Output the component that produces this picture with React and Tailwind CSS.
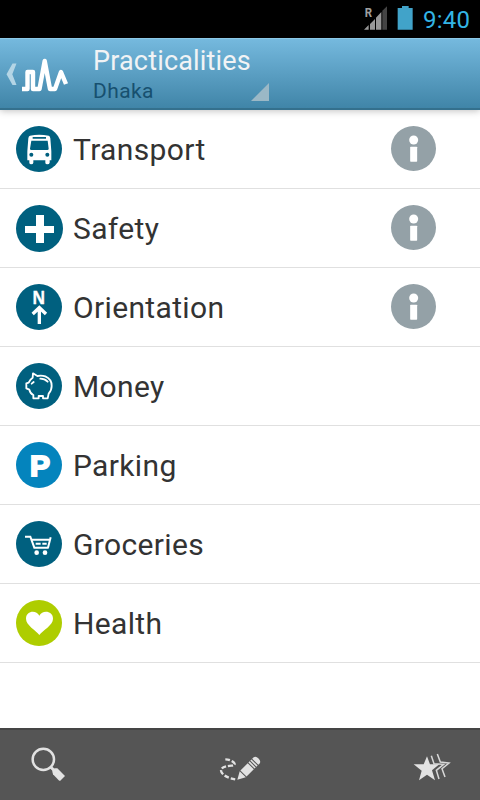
const BusIcon = () => (
  <svg viewBox="0 0 138 138" className="w-[46px] h-[46px]">
    <circle cx="69" cy="69" r="69" fill="#00607f" />
    <path
      fill="#fff"
      fillRule="evenodd"
      d="M42 29 Q69 24 98 29 Q102 30 103 37 L106 76 V103 H101 V110 Q100 115 94 115 Q88 115 88 110 V103 H52 V110 Q51 115 46 115 Q40 115 40 110 V103 H34 V76 L37 37 Q38 30 42 29 Z M50 33 V38 H90 V33 Z M46 44 L42 68 Q42 72 46 72 H94 Q98 72 98 68 L95 44 Z"
    />
    <circle cx="46" cy="86" r="6" fill="#00607f" />
    <circle cx="94" cy="86" r="6" fill="#00607f" />
  </svg>
)

const CrossIcon = () => (
  <svg viewBox="0 0 141 141" className="w-[47px] h-[47px]">
    <circle cx="70.5" cy="70.5" r="70.5" fill="#00607f" />
    <path fill="#fff" d="M60 30h24v33h30v21H84v30H60V84H27V63h33z" />
  </svg>
)

const NorthIcon = () => (
  <svg viewBox="0 0 138 138" className="w-[46px] h-[46px]">
    <circle cx="69" cy="69" r="69" fill="#00607f" />
    <text x="49" y="60" fill="#fff" stroke="#fff" strokeWidth="1" fontSize="55" fontWeight="700" textLength="39" lengthAdjust="spacingAndGlyphs" fontFamily="'Open Sans', sans-serif">N</text>
    <path d="M70 120V74M50 90l20-19 20 19" fill="none" stroke="#fff" strokeWidth="10" />
  </svg>
)

const PiggyIcon = () => (
  <svg viewBox="0 0 138 138" className="w-[46px] h-[46px]">
    <circle cx="69" cy="69" r="69" fill="#00607f" />
    <g fill="none" stroke="#fff" strokeWidth="5.5" strokeLinejoin="round" strokeLinecap="round">
      <path d="M51 31 L64 39 Q76 36 88 40 Q108 49 107 69 Q107 82 98 92 L95 106 H81 V99 H68 V106 H52 V96 Q43 92 40 80 L31 76 V61 L38 59 Q42 49 50 44 Z" />
      <path d="M73 47 Q86 47 95 56" />
      <path d="M47 62l6-5" />
    </g>
  </svg>
)

const ParkingIcon = () => (
  <svg viewBox="0 0 138 138" className="w-[46px] h-[46px]">
    <circle cx="69" cy="69" r="69" fill="#0484bd" />
    <text x="42" y="101" fill="#fff" stroke="#fff" strokeWidth="6" fontSize="89" fontWeight="700" textLength="60" lengthAdjust="spacingAndGlyphs" fontFamily="'Liberation Sans', sans-serif">P</text>
  </svg>
)

const CartIcon = () => (
  <svg viewBox="0 0 138 138" className="w-[46px] h-[46px]">
    <circle cx="69" cy="69" r="69" fill="#00607f" />
    <g fill="none" stroke="#fff" strokeWidth="6">
      <path d="M27 47H43L55 80H98" />
      <path d="M46 56H100M104 49L96 80" />
      <path d="M59 68H74M79 68H92" />
    </g>
    <circle cx="62" cy="95" r="7" fill="#fff" />
    <circle cx="87" cy="95" r="7" fill="#fff" />
  </svg>
)

const HeartIcon = () => (
  <svg viewBox="0 0 138 138" className="w-[46px] h-[46px]">
    <circle cx="69" cy="69" r="69" fill="#aecd00" />
    <path fill="#fff" d="M70 105C60 91 30 76 30 56C30 32 61 29 70 47C79 29 111 32 111 56C111 76 80 91 70 105Z" />
  </svg>
)

const InfoIcon = () => (
  <svg viewBox="0 0 135 135" className="w-[45px] h-[45px] -mt-px">
    <circle cx="67.5" cy="67.5" r="67.5" fill="#94a1a7" />
    <circle cx="68" cy="42" r="13.5" fill="#fff" />
    <rect x="57.5" y="62" width="21" height="45" rx="2" fill="#fff" />
  </svg>
)

const items = [
  { name: 'Transport', Icon: BusIcon, info: true },
  { name: 'Safety', Icon: CrossIcon, info: true },
  { name: 'Orientation', Icon: NorthIcon, info: true },
  { name: 'Money', Icon: PiggyIcon },
  { name: 'Parking', Icon: ParkingIcon },
  { name: 'Groceries', Icon: CartIcon },
  { name: 'Health', Icon: HeartIcon },
]

function StatusBar() {
  return (
    <div className="flex h-[38px] items-start justify-end bg-black">
      <svg viewBox="0 0 72 72" className="mt-[6px] w-6 h-6">
        <text x="2" y="33" fill="#a0a0a0" fontSize="37" fontWeight="700" textLength="22" lengthAdjust="spacingAndGlyphs" fontFamily="Roboto, sans-serif">R</text>
        <path fill="#444" d="M55 14L69 1V71H55Z" />
        <path fill="#989898" d="M0 71L14 57V71ZM18 54L33 39V71H18ZM36 35L52 18V71H36Z" />
      </svg>
      <svg viewBox="0 0 48 72" className="mt-[6px] ml-[9px] w-4 h-6">
        <path fill="#41a3c9" d="M15 0H35V6H47V71H2V6H15Z" />
      </svg>
      <span className="mt-[6px] ml-[10px] mr-[8px] w-[49px] whitespace-nowrap text-[24px] leading-[28px] tracking-[0.2px] text-[#33b5e5]">9:40</span>
    </div>
  )
}

function Header() {
  return (
    <header className="relative z-10 flex h-[72px] border-t border-b-2 border-t-[#8cc8e6] border-b-[#34708d] bg-linear-to-b from-[#75b9de] to-[#4085a8] shadow-[0_1px_7px_rgba(0,0,0,0.25)]">
      <svg viewBox="0 0 70 69" className="h-[69px] w-[70px] shrink-0">
        <path d="M12.5 24.5H16.5L12.3 35.2L16.5 46H12.5L6.5 35.2Z" fill="#b4d5e5" />
        <path d="M22 50H27.5V33H33V50H39.5L44.7 22L50 50H55L61 33L66 45" fill="none" stroke="#fff" strokeWidth="4.4" strokeLinejoin="round" />
      </svg>
      <div className="ml-[23px] flex flex-col">
        <h1 className="mt-[6px] text-[27px] leading-[32px] tracking-[0.17px] text-[#f1f3f5]">Practicalities</h1>
        <p className="mt-[1px] text-[21px] leading-[26px] tracking-[0.4px] text-[#17506f]">Dhaka</p>
      </div>
      <svg viewBox="0 0 18 18" className="mt-[44px] w-[18px] h-[18px]">
        <path d="M18 0V18H0Z" fill="#9bb8c6" />
      </svg>
    </header>
  )
}

function Row({ name, Icon, info }) {
  return (
    <li className="flex h-[79px] items-center border-b border-[#e0e0e0] pl-4 pr-[44px]">
      <div className="w-[57px] shrink-0"><Icon /></div>
      <span className="flex-1 pt-[2px] text-[30px] leading-9 tracking-[0.35px] text-[#333]">{name}</span>
      {info && <InfoIcon />}
    </li>
  )
}

function BottomBar() {
  return (
    <footer className="flex h-[72px] items-center justify-between border-t-2 border-[#454545] bg-[#555] px-[27px]">
      <svg viewBox="0 0 126 126" className="w-[42px] h-[42px]">
        <circle cx="49" cy="46" r="32" fill="none" stroke="#e2e2e2" strokeWidth="7.5" />
        <path d="M71 69L80 78" stroke="#e2e2e2" strokeWidth="9" />
        <path d="M76 83Q75 76 84 73L91 73L114 96L99 111L95 109L78 91Z" fill="#e2e2e2" />
      </svg>
      <svg viewBox="0 0 126 126" className="w-[42px] h-[42px]">
        <path d="M19 46Q34 46 45 56Q51 64 37 65Q1 68 7 83Q15 101 54 107" fill="none" stroke="#e2e2e2" strokeWidth="7" strokeDasharray="14 6" />
        <g transform="translate(55 107) rotate(-45)" fill="#e2e2e2">
          <path d="M0 0L23 -13V13ZM26 -13H57V13H26ZM60 -13H65V13H60ZM68 -13H73V13H68ZM76 -13H81Q90 -12 90 0Q90 12 81 13H76Z" />
        </g>
      </svg>
      <svg viewBox="0 0 126 126" className="w-[42px] h-[42px]">
        <g fill="none" stroke="#d8d8d8" strokeWidth="4.5">
          <path d="M61 35L69 59L98 61L76 79L84 105" />
          <path d="M79 30L88 54L114 57L93 74L102 99" />
        </g>
        <path d="M48 37L57 61H85L63 79L72 109L48 92L24 109L32 80L8 61H38Z" fill="#e2e2e2" />
      </svg>
    </footer>
  )
}

export default function App() {
  return (
    <div className="flex h-[800px] w-[480px] flex-col overflow-hidden bg-white font-['Roboto',sans-serif]">
      <StatusBar />
      <Header />
      <ul className="flex-1">
        {items.map((item) => (
          <Row key={item.name} {...item} />
        ))}
      </ul>
      <BottomBar />
    </div>
  )
}
